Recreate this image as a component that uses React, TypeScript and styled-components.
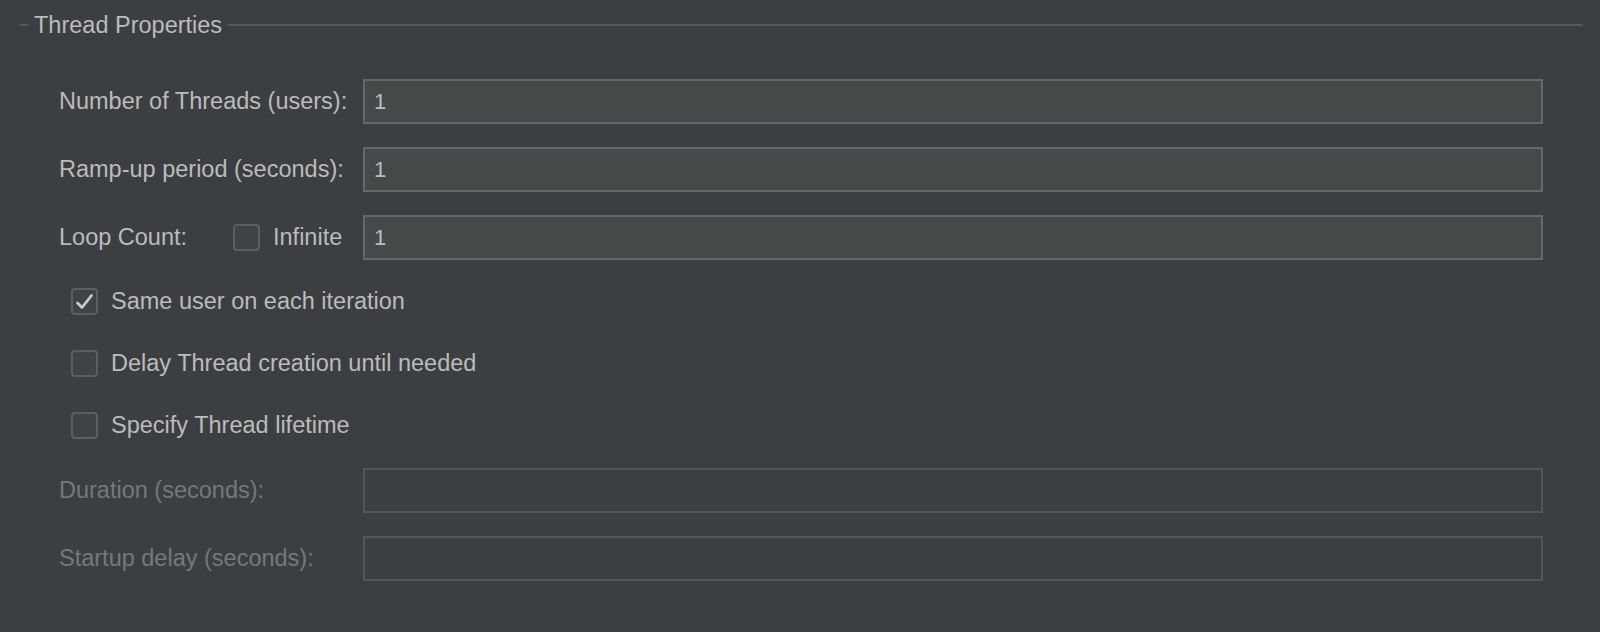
import { createGlobalStyle } from "styled-components";
import styled from "styled-components";

const GlobalStyle = createGlobalStyle`
  html, body {
    margin: 0;
    padding: 0;
    background: #3c3f41;
  }
  body {
    font-family: "Liberation Sans", Arial, sans-serif;
    color: #bbbbbb;
  }
`;

const Page = styled.div`
  width: 1600px;
  height: 632px;
  box-sizing: border-box;
  background: #3c3f41;
  padding-top: 11px;
  overflow: hidden;
`;

const Legend = styled.div`
  display: flex;
  align-items: center;
  height: 28px;
  padding: 0 17px 0 20px;
`;

const Rule = styled.div<{ $grow?: boolean }>`
  height: 2px;
  background: #56595b;
  width: ${({ $grow }) => ($grow ? "auto" : "8px")};
  flex: ${({ $grow }) => ($grow ? "1" : "none")};
`;

const Title = styled.span`
  font-size: 23.5px;
  color: #bbbbbb;
  padding: 0 6px 0 6px;
  line-height: 28px;
`;

const Form = styled.div`
  display: flex;
  flex-direction: column;
  padding: 40px 57px 0 59px;
`;

const FieldGroup = styled.div<{ $top?: number }>`
  display: flex;
  flex-direction: column;
  gap: 23px;
  margin-top: ${({ $top }) => $top ?? 0}px;
`;

const CheckGroup = styled.div`
  display: flex;
  flex-direction: column;
  gap: 35px;
  margin-top: 28px;
  padding-left: 12px;
`;

const FieldRow = styled.div`
  display: grid;
  grid-template-columns: 304px 1fr;
  align-items: center;
  height: 45px;
`;

const Label = styled.label<{ $disabled?: boolean }>`
  font-size: 23.5px;
  color: ${({ $disabled }) => ($disabled ? "#767879" : "#bbbbbb")};
  white-space: nowrap;
`;

const LoopLabel = styled.div`
  display: flex;
  align-items: center;
`;

const LoopText = styled(Label)`
  width: 174px;
`;

const Input = styled.input<{ $disabled?: boolean }>`
  box-sizing: border-box;
  height: 45px;
  width: 100%;
  padding: 0 9px;
  border: 2px solid ${({ $disabled }) => ($disabled ? "#535658" : "#65686a")};
  background: ${({ $disabled }) => ($disabled ? "#3c3f41" : "#45494a")};
  color: #bbbbbb;
  font-family: "Liberation Sans", Arial, sans-serif;
  font-size: 22px;
  outline: none;
`;

const CheckRow = styled.label`
  display: flex;
  align-items: center;
  gap: 13px;
  height: 27px;
  font-size: 23.5px;
  color: #bbbbbb;
`;

const Box = styled.span`
  box-sizing: border-box;
  width: 27px;
  height: 27px;
  border: 2px solid #5c5f61;
  border-radius: 4px;
  background: #404345;
  display: flex;
  align-items: center;
  justify-content: center;
  flex: none;
`;

const InlineCheck = styled.span`
  display: flex;
  align-items: center;
  gap: 13px;
`;

const Checkbox = ({ checked }: { checked?: boolean }) => (
  <Box>
    {checked ? (
      <svg width="19" height="18" viewBox="0 0 19 18">
        <path d="M2.5 10 L7 14.5 L16.5 2.5" fill="none" stroke="#c9c9c9" strokeWidth="2.8" strokeLinecap="round" strokeLinejoin="round" />
      </svg>
    ) : null}
  </Box>
);

export default function App() {
  return (
    <>
      <GlobalStyle />
      <Page>
        <Legend>
          <Rule />
          <Title>Thread Properties</Title>
          <Rule $grow />
        </Legend>
        <Form>
          <FieldGroup>
            <FieldRow>
              <Label>Number of Threads (users):</Label>
              <Input defaultValue="1" />
            </FieldRow>
            <FieldRow>
              <Label>Ramp-up period (seconds):</Label>
              <Input defaultValue="1" />
            </FieldRow>
            <FieldRow>
              <LoopLabel>
                <LoopText>Loop Count:</LoopText>
                <InlineCheck>
                  <Checkbox />
                  <Label>Infinite</Label>
                </InlineCheck>
              </LoopLabel>
              <Input defaultValue="1" />
            </FieldRow>
          </FieldGroup>
          <CheckGroup>
            <CheckRow>
              <Checkbox checked />
              Same user on each iteration
            </CheckRow>
            <CheckRow>
              <Checkbox />
              Delay Thread creation until needed
            </CheckRow>
            <CheckRow>
              <Checkbox />
              Specify Thread lifetime
            </CheckRow>
          </CheckGroup>
          <FieldGroup $top={29}>
            <FieldRow>
              <Label $disabled>Duration (seconds):</Label>
              <Input $disabled disabled />
            </FieldRow>
            <FieldRow>
              <Label $disabled>Startup delay (seconds):</Label>
              <Input $disabled disabled />
            </FieldRow>
          </FieldGroup>
        </Form>
      </Page>
    </>
  );
}
